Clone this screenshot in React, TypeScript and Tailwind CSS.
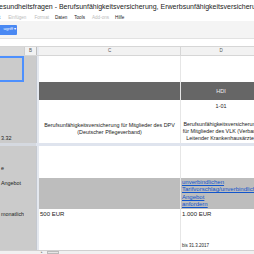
import React from "react";

const F = { fontFamily: '"Liberation Sans", Arial, sans-serif' };

export default function App() {
  return (
    <div className="w-[254px] h-[254px] overflow-hidden bg-white relative" style={F}>
      {/* Title */}
      <div className="h-[15px] flex items-center whitespace-nowrap text-[7px] text-[#222] ml-[-1px]">
        esundheitsfragen - Berufsunfähigkeitsversicherung, Erwerbsunfähigkeitsversicherung
      </div>
      {/* Menu */}
      <div className="h-[6px] flex items-center whitespace-nowrap text-[4.6px] leading-none">
        <span className="text-[#222] ml-[-1px]">t</span>
        <span className="text-[#bbb] ml-[8px]">Einfügen</span>
        <span className="text-[#bbb] ml-[8px]">Format</span>
        <span className="text-[#222] ml-[6px]">Daten</span>
        <span className="text-[#222] ml-[7px]">Tools</span>
        <span className="text-[#bbb] ml-[7px]">Add-ons</span>
        <span className="text-[#222] ml-[6px]">Hilfe</span>
      </div>
      {/* Toolbar */}
      <div className="h-[18px] bg-[#f4f4f4] border-b border-[#e2e2e2] flex items-center">
        <div className="h-[10px] w-[17px] bg-[#4a89f3] rounded-r-[1px] flex items-center justify-end pr-[1px] text-white text-[4.2px] leading-none whitespace-nowrap overflow-hidden">
          ugriff ▾
        </div>
      </div>
      {/* formula area */}
      <div className="h-[7px] bg-white" />
      {/* Column header */}
      <div className="h-[10px] flex border-t border-b border-[#d6d6d6] text-[4.5px] text-[#555] leading-none">
        <div className="w-[24px] shrink-0 bg-[#dadada]" />
        <div className="w-[12px] shrink-0 bg-[#f2f2f2] border-l border-[#cfcfcf] flex items-center justify-center">B</div>
        <div className="w-[1px] shrink-0 bg-[#bdbdbd]" />
        <div className="w-[2px] shrink-0 bg-[#e4e8ef]" />
        <div className="w-[142px] shrink-0 bg-[#f2f2f2] border-r border-[#d6d6d6] flex items-center justify-center">C</div>
        <div className="w-[80px] shrink-0 bg-[#f2f2f2] flex items-center justify-center">D</div>
      </div>

      {/* Body */}
      <div className="flex flex-col text-[5.4px] text-[#222] leading-[7px]">
        {/* Row 1 */}
        <Row h="h-[26px]"
          a={<div className="h-full w-[24px] border-2 border-l-0 border-solid border-[#4d90fe]" />}
          c={<div className="h-full" />}
          d={<div className="h-full" />}
        />
        {/* Dark row */}
        <Row h="h-[18px]"
          a={null}
          c={<div className="h-full bg-[#666666]" />}
          d={<div className="h-full bg-[#666666] flex items-center justify-center text-[#eeeeee] text-[5.6px]">HDI</div>}
        />
        {/* 1-01 */}
        <Row h="h-[12px]"
          a={null}
          c={<div className="h-full" />}
          d={<div className="h-full flex items-center justify-center">1-01</div>}
        />
        {/* Description row */}
        <Row h="h-[31px]"
          a={<div className="h-full flex items-end pb-[1px] whitespace-nowrap pl-[1px]">3.32</div>}
          c={
            <div className="h-full flex flex-col items-center justify-center pt-[3px] whitespace-nowrap">
              <span>Berufsunfähigkeitsversicherung für Mitglieder des DPV</span>
              <span>(Deutscher Pflegeverband)</span>
            </div>
          }
          d={
            <div className="h-full flex flex-col items-center justify-end pb-[1px] whitespace-nowrap">
              <span>Berufsunfähigkeitsversicherung</span>
              <span>für Mitglieder des VLK (Verband</span>
              <span>Leitender Krankenhausärzte)</span>
            </div>
          }
        />
        {/* Freeze line */}
        <div className="h-[3px] flex">
          <div className="w-[36px] shrink-0 bg-[#d5d9e0]" />
          <div className="flex-1 bg-[#dfe4ee]" />
        </div>
        {/* Row 5 */}
        <Row h="h-[32px]"
          a={<div className="h-full flex items-end pb-[6px] pl-[1px]">e</div>}
          c={<div className="h-full" />}
          d={<div className="h-full" />}
        />
        {/* Gray band */}
        <Row h="h-[31px]"
          a={<div className="h-full pt-[2px] whitespace-nowrap pl-[1px]">Angebot</div>}
          c={<div className="h-full bg-[#bdbdbd]" />}
          d={
            <div className="h-full bg-[#bdbdbd] flex flex-col pl-[1px] pt-[1px] text-[6px] leading-[7.4px] text-[#1155cc] whitespace-nowrap">
              <span className="underline">unverbindlichen</span>
              <span className="underline">Tarifvorschlag/unverbindliches</span>
              <span className="underline">Angebot</span>
              <span className="underline">anfordern</span>
            </div>
          }
        />
        {/* Amount row */}
        <Row h="h-[41px]"
          a={<div className="h-full pt-[2px] whitespace-nowrap pl-[1px]">monatlich</div>}
          c={<div className="h-full pt-[2px] pl-[1px] text-[6px]">500 EUR</div>}
          d={
            <div className="h-full flex flex-col justify-between pl-[1px] pt-[2px] pb-[2px]">
              <span className="text-[6px]">1.000 EUR</span>
              <span className="text-[4.5px] leading-[5px]">bis 31.3.2017</span>
            </div>
          }
        />
        {/* Bottom bar */}
        <div className="h-[4px] flex bg-[#f1f1f1] border-t border-[#d0d0d0]">
          <div className="w-[41px] shrink-0" />
          <div className="w-[3px] h-[3px] text-[3px] leading-none text-[#666]">▸</div>
          <div className="w-[12px] h-[3px] ml-[3px] border border-[#bbb] bg-[#e6e6e6]" />
        </div>
      </div>
    </div>
  );
}

function Row({ h, a, c, d }: { h: string; a: React.ReactNode; c: React.ReactNode; d: React.ReactNode }) {
  return (
    <div className={`flex ${h}`}>
      <div className="w-[24px] shrink-0 bg-[#cbcbcb] overflow-hidden">{a}</div>
      <div className="w-[12px] shrink-0 bg-[#cbcbcb]" />
      <div className="w-[1px] shrink-0 bg-[#c4c8cf]" />
      <div className="w-[2px] shrink-0 bg-[#e4e8ef]" />
      <div className="w-[142px] shrink-0 border-r border-[#e6e6e6] overflow-hidden">{c}</div>
      <div className="w-[80px] shrink-0 overflow-hidden">{d}</div>
    </div>
  );
}
